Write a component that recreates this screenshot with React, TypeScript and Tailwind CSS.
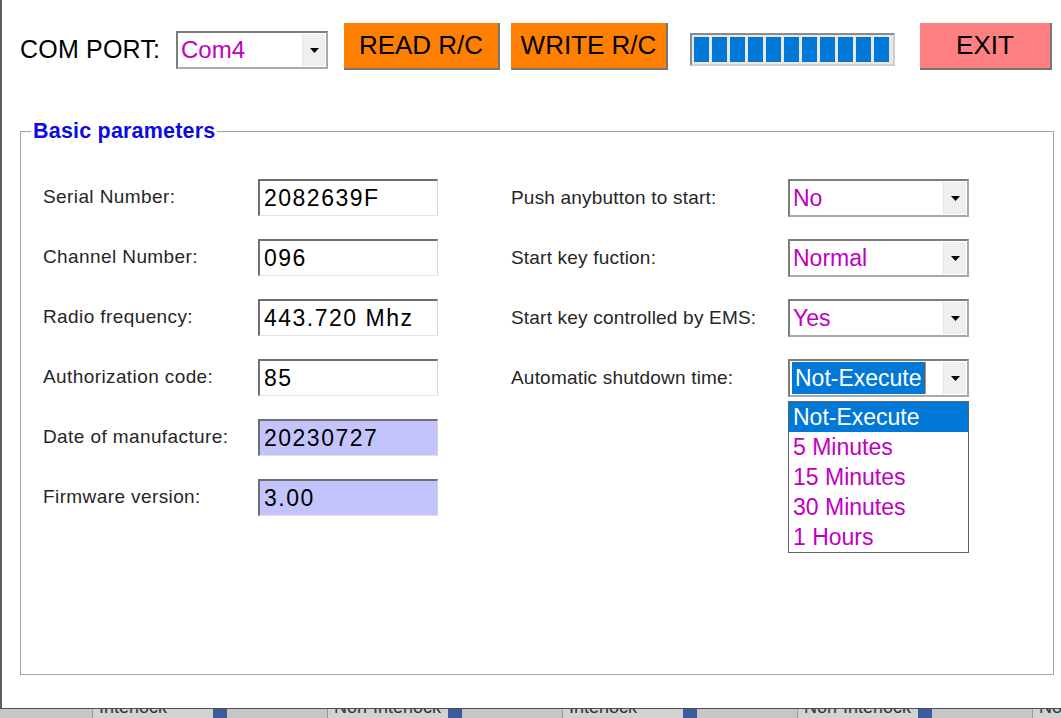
import React from "react";

const leftRows = [
  { label: "Serial Number:", value: "2082639F", locked: false },
  { label: "Channel Number:", value: "096", locked: false },
  { label: "Radio frequency:", value: "443.720 Mhz", locked: false },
  { label: "Authorization code:", value: "85", locked: false },
  { label: "Date of manufacture:", value: "20230727", locked: true },
  { label: "Firmware version:", value: "3.00", locked: true },
];

const rightRows = [
  { label: "Push anybutton to start:", value: "No" },
  { label: "Start key fuction:", value: "Normal" },
  { label: "Start key controlled by EMS:", value: "Yes" },
  { label: "Automatic shutdown time:", value: "Not-Execute", open: true },
];

const shutdownOptions = ["Not-Execute", "5 Minutes", "15 Minutes", "30 Minutes", "1 Hours"];

const strip = ["Interlock", "Non-Interlock", "Interlock", "Non-Interlock", "No"];

const Arrow = () => (
  <svg width="9" height="5" viewBox="0 0 9 5">
    <path d="M0 0h9L4.5 5z" fill="#000" />
  </svg>
);

const DropButton = () => (
  <div className="my-[1px] mr-[1px] flex w-[23px] items-center justify-center border-l border-l-[#e6e6e6] bg-[#efefef]">
    <Arrow />
  </div>
);

const TextBox = ({ value, locked }: { value: string; locked: boolean }) => (
  <div
    className={`flex h-[37px] w-[180px] items-center border-t-2 border-l-2 border-r border-b border-t-[#6f6f6f] border-l-[#6f6f6f] border-r-[#d6d6d6] border-b-[#e2e2e2] pl-[4px] text-[23px] tracking-[1.5px] text-black ${
      locked ? "bg-[#c4c4fc]" : "bg-white"
    }`}
  >
    {value}
  </div>
);

const Combo = ({ value, open }: { value: string; open?: boolean }) => (
  <div className="relative">
    <div className="flex h-[38px] w-[181px] border-2 border-[#a9a9a9] border-t-[#7c7c7c] border-l-[#7c7c7c] bg-white">
      <div className="flex flex-1 items-center px-[3px] text-[23px] text-[#c000c0]">
        {open ? (
          <span className="-ml-[1px] flex h-[32px] items-center border-r border-r-[#e8822e] bg-[#0078d7] px-[3px] text-white">
            {value}
          </span>
        ) : (
          value
        )}
      </div>
      <DropButton />
    </div>
    {open && (
      <div className="absolute top-[42px] left-0 z-10 w-[181px] border border-[#646464] bg-white">
        {shutdownOptions.map((opt, i) => (
          <div
            key={opt}
            className={`h-[30px] px-[4px] text-[23px] leading-[30px] ${
              i === 0 ? "bg-[#0078d7] text-white" : "text-[#c000c0]"
            }`}
          >
            {opt}
          </div>
        ))}
      </div>
    )}
  </div>
);

const ToolButton = ({ text, className }: { text: string; className: string }) => (
  <button
    className={`flex h-[47px] items-center justify-center border-r-2 border-b-2 border-r-[#767676] border-b-[#767676] text-[26px] text-black ${className}`}
  >
    {text}
  </button>
);

export default function App() {
  return (
    <div className="flex h-[718px] w-[1061px] flex-col overflow-hidden bg-[#c6c6c6] font-['Liberation_Sans',Arial,sans-serif]">
      <div className="flex h-[709px] shrink-0 flex-col border-b border-l-2 border-b-[#4e4e4e] border-l-[#5e5e5e] bg-white">
        {/* top bar */}
        <div className="mt-[23px] flex items-start pl-[18px]">
          <div className="mt-[12px] w-[156px] text-[25px] leading-[29px] tracking-[0.2px] text-black">COM PORT:</div>
          <div className="mt-[8px] flex h-[38px] w-[152px] border-2 border-[#a9a9a9] border-t-[#7c7c7c] border-l-[#7c7c7c] bg-white">
            <div className="flex flex-1 items-center px-[3px] text-[24px] text-[#c000c0]">Com4</div>
            <DropButton />
          </div>
          <ToolButton text="READ R/C" className="ml-[16px] w-[156px] bg-[#ff8000]" />
          <ToolButton text="WRITE R/C" className="ml-[11px] w-[157px] bg-[#ff8000]" />
          <div className="mt-[10px] ml-[22px] flex h-[33px] w-[205px] gap-[3px] border-2 border-[#d0d0d0] border-t-[#8a8a8a] border-l-[#8a8a8a] bg-[#e8e8e8] p-[2px]">
            {Array.from({ length: 11 }).map((_, i) => (
              <div key={i} className="h-full w-[15px] bg-[#0078d7]" />
            ))}
          </div>
          <ToolButton text="EXIT" className="ml-[25px] w-[132px] bg-[#ff8080]" />
        </div>

        {/* group */}
        <div className="relative mt-[61px] ml-[18px] h-[544px] w-[1034px] border border-[#a3a3a3]">
          <span className="absolute -top-[13px] left-[10px] bg-white px-[2px] text-[21.5px] leading-[24px] font-bold tracking-[0.2px] text-[#0c0ce0]">
            Basic parameters
          </span>
          <div className="flex pt-[47px] pl-[22px]">
            <div className="flex flex-col gap-[23px]">
              {leftRows.map((r) => (
                <div key={r.label} className="flex h-[37px] items-center">
                  <div className="w-[215px] text-[19px] tracking-[0.4px] text-[#262626]">{r.label}</div>
                  <TextBox value={r.value} locked={r.locked} />
                </div>
              ))}
            </div>
            <div className="ml-[73px] flex flex-col gap-[22px]">
              {rightRows.map((r) => (
                <div key={r.label} className="flex h-[38px] items-center">
                  <div className="w-[277px] text-[19px] tracking-[0.2px] text-[#262626]">{r.label}</div>
                  <Combo value={r.value} open={r.open} />
                </div>
              ))}
            </div>
          </div>
        </div>
      </div>

      {/* window behind */}
      <div className="flex h-[9px] overflow-hidden">
        <div className="w-[92px] shrink-0" />
        {strip.map((t, i) => (
          <div key={i} className="flex w-[235px] shrink-0 border-l border-l-[#9a9a9a]">
            <div className="w-[120px] shrink-0 overflow-hidden bg-[#d2d2d2] pl-[6px]">
              <div className="-mt-[12px] text-[18px] leading-[20px] text-[#333]">{t}</div>
            </div>
            <div className="w-[14px] shrink-0 bg-[#3b5c9c]" />
          </div>
        ))}
      </div>
    </div>
  );
}
